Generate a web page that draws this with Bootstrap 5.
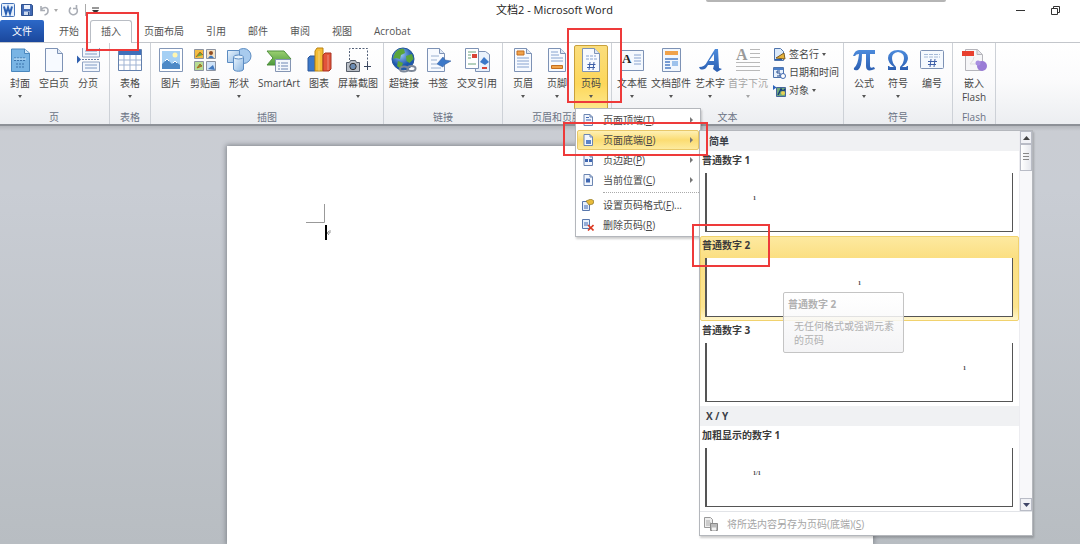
<!DOCTYPE html>
<html lang="zh-CN">
<head>
<meta charset="utf-8">
<meta name="viewport" content="width=device-width, initial-scale=1">
<title>文档2 - Microsoft Word</title>
<link href="https://cdn.jsdelivr.net/npm/bootstrap@5.3.0/dist/css/bootstrap.min.css" rel="stylesheet">
<style>
  body { font: 10px/14px "Open Sans", "Noto Sans CJK SC", sans-serif; color: #333; background: #fff; overflow: hidden; }
  button { font: inherit; color: inherit; background: none; border: 0; padding: 0; }
  svg { display: block; flex: none; }

  .title-bar { height: 20px; }
  .quick-bar { gap: 6px; padding-left: 1px; }
  .quick-rule { width: 1px; height: 12px; background: #aaa; }
  .title-text { font-size: 11px; color: #222; padding-left: 48px; }
  .window-btns { gap: 26px; padding-right: 20px; }
  .peek-edge { position: absolute; top: 0; right: 134px; width: 240px; height: 2px; background: #b5b5b5; border-radius: 0 0 2px 2px; }

  .ribbon-tabs { height: 22px; }
  .ribbon-tabs a { display: block; padding: 4px 11px; color: #555; text-decoration: none; white-space: nowrap; height: 22px; }
  .ribbon-tabs a.file-tab { background: linear-gradient(#2c68c8, #1b479c); color: #fff; border-radius: 2px 2px 0 0; padding: 4px 12px; margin-right: 4px; }
  .ribbon-tabs a.current-tab { border: 1px solid #b9bdc4; border-bottom: 0; border-radius: 3px 3px 0 0; padding: 3px 10px; background: #fff; height: 23px; position: relative; margin-right: 1px; }

  .ribbon { height: 84px; background: linear-gradient(#fff 0, #fbfbfc 45%, #eceef1 100%); border-top: 1px solid #c3c6cb; border-bottom: 2px solid #8d9197; }
  .ribbon-group { padding: 0 3px; border-right: 1px solid #cdd1d7; }
  .ribbon-group:first-child { padding-right: 4px; }
  .group-name { color: #6b7384; text-align: center; height: 14px; white-space: nowrap; }
  .tool { width: 34px; height: 65px; margin-top: 2px; display: flex; flex-direction: column; align-items: center; padding-top: 2px; white-space: nowrap; border-radius: 2px; color: #484848; }
  .tool svg.pic { width: 26px; height: 26px; margin-bottom: 3px; }
  .tool.w36 { width: 36px; } .tool.w42 { width: 42px; } .tool.w44 { width: 44px; } .tool.w46 { width: 46px; }
  .tool.pressed { border: 1px solid #c9a13c; padding-top: 1px; background: linear-gradient(#fadd7c, #fdd75a 60%, #fde88c); }
  .tool:disabled { color: #a4a4a4; }
  .caret { width: 0; height: 0; border: 2px solid transparent; border-top: 3px solid #555; border-bottom: 0; margin: 5px 0 0 0; flex: none; }
  .caret.side { margin: 0 0 0 4px; }
  .small-tools { width: 71px; padding: 2px 0 0 4px; color: #484848; }
  .small-tools button { display: flex; align-items: center; height: 18px; white-space: nowrap; gap: 3px; }
  .small-tools .caret { margin: 0; }

  .desk { background: linear-gradient(#b4b7bc 0, #cacdd3 5px, #c9cdd4 15%, #b8bdc2 100%); display: grid; grid-template-columns: 227fr 646fr 207fr; padding-top: 20px; }
  .sheet { grid-column: 2; background: #fff; box-shadow: 0 0 5px 1px #80858c; padding: 58px 0 0 79px; }

  .pop { position: absolute; background: #fff; border: 1px solid #b4b7bc; box-shadow: 1px 2px 2px #0003; z-index: 5; }
  .page-menu { left: 1px; top: 65px; width: 126px; padding: 1px; text-align: left; color: #484848; }
  .page-menu button { display: flex; align-items: center; width: 100%; height: 20px; padding-left: 4px; white-space: nowrap; border: 1px solid transparent; border-radius: 2px; }
  .page-menu button span { margin-left: 9px; }
  .page-menu button.chosen { background: linear-gradient(#fef0b4, #fbdc72 50%, #fdeb9f); border-color: #e8c869; }
  .page-menu .arrow { width: 0; height: 0; border: 3px solid transparent; border-left-color: #777; border-right: 0; margin-left: auto; margin-right: 5px; }
  .page-menu hr { margin: 2px 0 2px 26px; border: 0; border-top: 1px dotted #aaa; opacity: 1; }

  .gallery { left: 125px; top: 87px; width: 334px; }
  .gallery h6 { font-size: 10px; line-height: 20px; font-weight: 700; color: #3b3f48; margin: 0; background: #f0f1f3; padding-left: 6px; }
  .gallery h6.first-head { padding-left: 9px; }
  .choice { display: block; width: 100%; height: 85px; padding: 0 5px 0 1px; font-weight: 700; color: #3a3a3a; text-align: left; border: 1px solid transparent; border-radius: 2px; }
  .choice.hot { background: linear-gradient(#fde9a0, #fbdf83 20px, #fce48f 70px, #fff6cc); border-color: #f1d26e; }
  .choice .preview { display: block; height: 59px; margin: 6px 0 2px 3px; background: #fff; border: 1px solid #555; border-top: 0; border-left-width: 2px; font: 700 6px/8px "Liberation Serif", serif; padding: 21px 46px 0; }
  .gallery .roller { width: 13px; background: #f8f8fa; border-left: 1px solid #ececf0; }
  .roller button { height: 13px; border: 1px solid #b9bcc6; background: #f1f2f6; display: flex; align-items: center; justify-content: center; }
  .roller .thumb { height: 27px; border: 1px solid #b9bcc6; background: linear-gradient(90deg, #fff, #e6e8ed); padding: 8px 2px; }
  .thumb i { display: block; height: 1px; background: #888; margin-bottom: 2px; }
  .gallery-foot { height: 24px; border-top: 1px solid #e2e4e8; color: #a5a5a5; padding-left: 4px; }
  .gallery-foot button { display: flex; align-items: center; gap: 9px; }
  .gallery .tip { position: absolute; left: 83px; top: 161px; width: 121px; height: 61px; background: linear-gradient(#ffffffd9, #f2f2f4d9); border: 1px solid #c4c4c4; border-radius: 2px; color: #b0b0b0; padding: 4px; }
  .tip p { margin: 8px 0 0 6px; }

  .marker { position: absolute; border: 2px solid #ee3a3a; z-index: 20; pointer-events: none; }
  .mark-tab { left: -5px; top: -9px; width: 53px; height: 39px; }
  .mark-tool { left: -7px; top: -15px; width: 55px; height: 75px; }
  .mark-item { left: -11px; top: 79px; width: 145px; height: 34px; }
  .mark-choice { left: -8px; top: 93px; width: 78px; height: 43px; }
</style>
</head>
<body class="vh-100 d-flex flex-column position-relative">
<svg width="0" height="0" class="position-absolute">
  <defs>
    <linearGradient id="blue" x1="0" y1="0" x2="1" y2="1"><stop offset="0" stop-color="#eaf4fd"/><stop offset="1" stop-color="#8ab6e2"/></linearGradient>
    <linearGradient id="deep" x1="0" y1="0" x2="0" y2="1"><stop offset="0" stop-color="#4c8bdc"/><stop offset="1" stop-color="#2c5fb2"/></linearGradient>
    <linearGradient id="green" x1="0" y1="0" x2="0" y2="1"><stop offset="0" stop-color="#9bd070"/><stop offset="1" stop-color="#4c9a3d"/></linearGradient>
    <radialGradient id="globe" cx=".4" cy=".3"><stop offset="0" stop-color="#9cc9f5"/><stop offset="1" stop-color="#1c57ae"/></radialGradient>
    <symbol id="leaf" viewBox="0 0 26 26"><path d="M4.500 1.500h12l5 5v18h-17z" fill="#f7faff" stroke="#7d92b5"/><path d="M16.500 1.500v5h5" fill="#dfe8f5" stroke="#7d92b5"/></symbol>
    <symbol id="mini" viewBox="0 0 12 12"><path d="M2 .5h6l2.500 2.500v8.500H2z" fill="#f2f6fd" stroke="#6c86b2"/><path d="M8 .5V3h2.500" fill="none" stroke="#6c86b2"/></symbol>
  </defs>
</svg>

<header>
  <div class="title-bar row g-0 align-items-center">
    <div class="col d-flex align-items-center quick-bar">
      <svg width="14" height="14" viewBox="0 0 14 14"><rect x=".5" y=".5" width="13" height="13" rx="1" fill="#e5effb" stroke="#4472b8"/><path d="M3 3.500l2 7 2-6 2 6 2-7" fill="none" stroke="#2a5fb2" stroke-width="2"/></svg>
      <button aria-label="保存"><svg width="12" height="12" viewBox="0 0 12 12"><path d="M.5.500h10l1 1v10H.500z" fill="#4169b4" stroke="#30528f"/><path d="M3 1h6v4H3z" fill="#e9f0fb"/><path d="M3 7.500h6V11H3z" fill="#cfdcef"/><path d="M7 8h1.500v3H7z" fill="#30528f"/></svg></button>
      <button aria-label="撤消" class="d-flex align-items-center"><svg width="11" height="11" viewBox="0 0 11 11"><path d="M2 1v4.500h4M2 5C4 1.500 9.500 1.500 9 6c0 2-1.500 3.500-3.500 4" fill="none" stroke="#a9adb5" stroke-width="1.600"/></svg><i class="caret side opacity-50"></i></button>
      <button aria-label="恢复" class="ms-1"><svg width="11" height="11" viewBox="0 0 11 11"><path d="M3 2.500a4 4 0 1 0 5.500.800M8.500 0v3.500H5" fill="none" stroke="#a9adb5" stroke-width="1.600"/></svg></button>
      <i class="quick-rule"></i>
      <button aria-label="自定义"><svg width="7" height="7" viewBox="0 0 7 7"><path d="M0 1h7" stroke="#333"/><path d="M0 3h7L3.500 7z" fill="#333"/></svg></button>
    </div>
    <div class="col-auto title-text">文档2 - Microsoft Word</div>
    <div class="col d-flex justify-content-end align-items-center window-btns">
      <button aria-label="最小化"><svg width="9" height="9" viewBox="0 0 9 9"><path d="M0 4.500h9" stroke="#333"/></svg></button>
      <button aria-label="还原"><svg width="9" height="9" viewBox="0 0 9 9"><path d="M.5 2.500h6v6h-6zM2.500 2.500v-2h6v6h-2" fill="none" stroke="#333"/></svg></button>
    </div>
    <div class="peek-edge"></div>
  </div>

  <nav class="ribbon-tabs d-flex">
    <a href="#" class="file-tab">文件</a>
    <a href="#">开始</a>
    <a href="#" class="current-tab">插入<span class="marker mark-tab"></span></a>
    <a href="#">页面布局</a>
    <a href="#">引用</a>
    <a href="#">邮件</a>
    <a href="#">审阅</a>
    <a href="#">视图</a>
    <a href="#">Acrobat</a>
  </nav>

  <div class="ribbon d-flex">
    <section class="ribbon-group">
      <div class="d-flex">
        <button class="tool"><svg class="pic" viewBox="0 0 26 26"><path d="M4.500 2h13l5 4v18.500h-18z" fill="#78b4e4" stroke="#4a87bd"/><path d="M17.500 2v4.500h5" fill="#cfe6f8" stroke="#4a87bd"/><path d="M7 11h12M7 13.500h12M9 17h9M9 20h9" stroke="#3b73ab" stroke-dasharray="2 1"/><path d="M7 12h12" stroke="#cde6f8"/></svg>封面<i class="caret"></i></button>
        <button class="tool"><svg class="pic" viewBox="0 0 26 26"><use href="#leaf"/></svg>空白页</button>
        <button class="tool"><svg class="pic" viewBox="0 0 26 26"><path d="M7.500 1v9h17V1M7.500 24.500v-9.500h17v9.500z" fill="#f3f7fd" stroke="#8ea2c2"/><path d="M10 4h12M10 7h12M10 18h12M10 21h12" stroke="#7f9ac4"/><path d="M7 12.500h18" stroke="#6f83a6" stroke-dasharray="2 1"/><path d="M2 8.500l4 4-4 4z" fill="#2f5fae"/></svg>分页</button>
      </div>
      <div class="group-name">页</div>
    </section>
    <section class="ribbon-group">
      <div class="d-flex">
        <button class="tool"><svg class="pic" viewBox="0 0 26 26"><path d="M1.500 2.500h23v21h-23z" fill="#fff" stroke="#6380ad"/><path d="M2 3h22v5H2z" fill="#3f6fba"/><path d="M7 8v15M13 8v15M19 8v15M2 13h22M2 18h22" stroke="#9fb3d3"/></svg>表格<i class="caret"></i></button>
      </div>
      <div class="group-name">表格</div>
    </section>
    <section class="ribbon-group">
      <div class="d-flex">
        <button class="tool"><svg class="pic" viewBox="0 0 26 26"><path d="M1.500 1.500h23v23h-23z" fill="#fff" stroke="#8397b8"/><path d="M4 4h18v18H4z" fill="#a5d0f4"/><circle cx="17" cy="8" r="2.500" fill="#fff6b0"/><path d="M4 17l5-5 5 5 3-3 5 4v4H4z" fill="#4e8ac6"/><path d="M7 14l2-2 2 2M15 16l2-2 2 2" stroke="#fff" fill="none"/></svg>图片</button>
        <button class="tool"><svg class="pic" viewBox="0 0 26 26"><g stroke="#8b93a1"><path d="M2.500 2.500h9v9h-9z" fill="#f3bd43"/><path d="M14.500 2.500h9v9h-9z" fill="#f3e3c5"/><path d="M2.500 14.500h9v9h-9z" fill="#b7dc93"/><path d="M14.500 14.500h9v9h-9z" fill="#cfe3f8"/></g><path d="M4 10l4-5 3 3M5 21l3-4 2 2z" stroke="#b4661c" fill="#69a940"/><circle cx="19" cy="6" r="2" fill="#934c20"/><path d="M16 11q3-5 6 0M16 22l5-4 2 5z" fill="#4179bf"/></svg>剪贴画</button>
        <button class="tool"><svg class="pic" viewBox="0 0 26 26"><circle cx="17.500" cy="9" r="7.500" fill="#a8cbee" stroke="#5c8cc2"/><path d="M1.500 3.500h12v12h-12z" fill="url(#blue)" stroke="#5c8cc2"/><path d="M7.500 10v12c0 3 10 3 10 0V10" fill="url(#blue)" stroke="#5c8cc2"/><ellipse cx="12.500" cy="10" rx="5" ry="2" fill="#e6f2fc" stroke="#5c8cc2"/></svg>形状<i class="caret"></i></button>
        <button class="tool w46"><svg class="pic" viewBox="0 0 26 26"><path d="M1 4h17l7 8-5 6H1l6-7z" fill="url(#green)" stroke="#4f8f3d"/><path d="M9.500 12.500h15v12h-15z" fill="#f5f8fc" stroke="#8495b3"/><path d="M12 16h2M15 16h7M12 19h2M15 19h7M12 22h2M15 22h7" stroke="#6f87b3"/></svg>SmartArt</button>
        <button class="tool"><svg class="pic" viewBox="0 0 26 26"><path d="M2 11l2-2h5v15H2z" fill="#3c78c8" stroke="#2a569a"/><path d="M9 4l2-3h6v23H9z" fill="#f4bd35" stroke="#b98313"/><path d="M17 8l2-2h6v16l-2 2h-6z" fill="#e2543a" stroke="#a83222"/><path d="M13 4v20M22 8v15" stroke="#fff" opacity=".35"/></svg>图表</button>
        <button class="tool w44"><svg class="pic" viewBox="0 0 26 26"><path d="M4.500 13V1.500h18v16" fill="none" stroke="#536078" stroke-dasharray="2 1.500"/><path d="M19 19.500h7M22.500 16v7" stroke="#38455e"/><path d="M1.500 15.500h3l1-2h5l1 2h3v9h-13z" fill="#b9bec6" stroke="#555d69"/><circle cx="8" cy="19.500" r="3.200" fill="#6d8db3" stroke="#333"/></svg>屏幕截图<i class="caret"></i></button>
      </div>
      <div class="group-name">插图</div>
    </section>
    <section class="ribbon-group">
      <div class="d-flex">
        <button class="tool"><svg class="pic" viewBox="0 0 26 26"><circle cx="12" cy="12" r="11" fill="url(#globe)" stroke="#23569b"/><path d="M4 6q4-5 9-4l1 4-4 2-1 4-4-1-3 1zM15 9l6-2 1.500 5-4 4-3-2zM7 14l5 2-2 6-4-3z" fill="#5aa53b"/><g fill="none" stroke="#7c8798" stroke-width="2"><ellipse cx="13" cy="22" rx="4" ry="2.500"/><ellipse cx="20.500" cy="21.500" rx="4" ry="2.500"/></g></svg>超链接</button>
        <button class="tool"><svg class="pic" viewBox="0 0 26 26"><use href="#leaf" x="-2"/><path d="M6 9h8M6 13h6M6 17h6M6 21h10" stroke="#9ab0d0"/><path d="M12 17l6-7 2 3 6 1-7 4-1 2z" fill="#3c78c8" stroke="#2a569a" stroke-width=".500"/></svg>书签</button>
        <button class="tool w44"><svg class="pic" viewBox="0 0 26 26"><path d="M11.500 4.500h10l4 3v17h-14z" fill="#eaf2fc" stroke="#7d92b5"/><path d="M1.500 1.500h13v20h-13z" fill="#fff" stroke="#7d92b5"/><path d="M4 5h8M4 8h3M4 11h3M4 17h8" stroke="#6aa37c"/><path d="M8 7h5v4H8zM18 20h5v2h-5z" fill="#d94537"/><path d="M16 15l4-5 5 5-4 3z" fill="#3c78c8"/></svg>交叉引用</button>
      </div>
      <div class="group-name">链接</div>
    </section>
    <section class="ribbon-group">
      <div class="d-flex">
        <button class="tool"><svg class="pic" viewBox="0 0 26 26"><use href="#leaf"/><path d="M7 4h7v4H7z" fill="#f0a24a" stroke="#c46f1f"/><path d="M7 11h12M7 14h12M7 17h12M7 20h12" stroke="#86a2cf"/></svg>页眉<i class="caret"></i></button>
        <button class="tool"><svg class="pic" viewBox="0 0 26 26"><use href="#leaf"/><path d="M7 5h7M7 8h8M7 11h12M7 14h12" stroke="#86a2cf"/><path d="M7.500 18.500h11v3h-11z" fill="#f0a24a" stroke="#c46f1f"/></svg>页脚<i class="caret"></i></button>
        <div class="position-relative">
          <button class="tool pressed"><svg class="pic" viewBox="0 0 26 26"><use href="#leaf"/><path d="M8 9h10M8 12h11" stroke="#86a2cf" stroke-dasharray="3 1"/><path d="M12 15l-1 8M16 15l-1 8M9.500 17.500h8M9 20.500h8" stroke="#3e5fa8" fill="none"/></svg>页码<i class="caret"></i></button>
          <span class="marker mark-tool"></span>
          <div class="pop page-menu">
            <button><svg width="12" height="12" viewBox="0 0 12 12"><use href="#mini"/><path d="M4 3.500h3M4 6h5M4 8.500h5" stroke="#3f67b1"/></svg><span>页面顶端(<u>T</u>)</span><i class="arrow"></i></button>
            <button class="chosen"><svg width="12" height="12" viewBox="0 0 12 12"><use href="#mini"/><path d="M4 6h5v4H4z" fill="#5a82c7"/></svg><span>页面底端(<u>B</u>)</span><i class="arrow"></i></button>
            <button><svg width="12" height="12" viewBox="0 0 12 12"><use href="#mini"/><path d="M3 5h3v3H3zM7 5h3v3H7z" fill="#3f67b1"/></svg><span>页边距(<u>P</u>)</span><i class="arrow"></i></button>
            <button><svg width="12" height="12" viewBox="0 0 12 12"><use href="#mini"/><path d="M4 4.500h4v4H4z" fill="#3f67b1"/></svg><span>当前位置(<u>C</u>)</span><i class="arrow"></i></button>
            <hr>
            <button><svg width="12" height="12" viewBox="0 0 12 12"><path d="M.5 2.500h7v9h-7z" fill="#e8f0fb" stroke="#5877ac"/><path d="M2 7h4M2 9h4" stroke="#3f67b1"/><path d="M4 2l5-2 3 2-1 3-4 1z" fill="#e8bb3a" stroke="#8a7226" stroke-width=".700"/></svg><span>设置页码格式(<u>F</u>)...</span></button>
            <button><svg width="12" height="12" viewBox="0 0 12 12"><path d="M.5.500h7v9h-7z" fill="#e8f0fb" stroke="#5877ac"/><path d="M2 4h4M2 6h4" stroke="#3f67b1"/><path d="M6 6l5.500 5.500M11.500 6L6 11.500" stroke="#dc3a22" stroke-width="1.600"/></svg><span>删除页码(<u>R</u>)</span></button>
          </div>
          <span class="marker mark-item"></span>
          <div class="pop gallery text-start">
            <div class="d-flex">
              <div class="flex-fill">
                <h6 class="first-head">简单</h6>
                <button class="choice">普通数字 1<span class="preview">1</span></button>
                <button class="choice hot">普通数字 2<span class="preview text-center">1</span></button>
                <button class="choice">普通数字 3<span class="preview text-end">1</span></button>
                <h6>X / Y</h6>
                <button class="choice">加粗显示的数字 1<span class="preview">1/1</span></button>
              </div>
              <div class="roller d-flex flex-column">
                <button aria-label="向上"><svg width="7" height="4"><path d="M0 4l3.500-4L7 4z" fill="#444"/></svg></button>
                <div class="thumb"><i></i><i></i><i></i></div>
                <button aria-label="向下" class="mt-auto"><svg width="7" height="4"><path d="M0 0l3.500 4L7 0z" fill="#3f4668"/></svg></button>
              </div>
            </div>
            <div class="gallery-foot d-flex align-items-center"><button disabled><svg width="14" height="14" viewBox="0 0 14 14"><path d="M.5.500h6l2 2v8h-8z" fill="#eee" stroke="#999"/><path d="M2 4h4M2 6h5M2 8h5" stroke="#aaa"/><path d="M6.500 6.500h7v7h-7z" fill="#bbb" stroke="#8a8a8a"/><path d="M8 10.500h4v3H8z" fill="#f4f4f4"/></svg><span>将所选内容另存为页码(底端)(<u>S</u>)</span></button></div>
            <div class="tip" role="tooltip"><b>普通数字 2</b><p>无任何格式或强调元素的页码</p></div>
            <span class="marker mark-choice"></span>
          </div>
        </div>
      </div>
      <div class="group-name">页眉和页脚</div>
    </section>
    <section class="ribbon-group">
      <div class="d-flex">
        <button class="tool"><svg class="pic" viewBox="0 0 26 26"><path d="M1.500 3.500h23v20h-23z" fill="#f5f9fe" stroke="#7d92b5"/><path d="M15 8h7M15 11h7M15 14h7M15 17h7" stroke="#86a2cf"/><text x="3" y="16" font-family="Liberation Serif, serif" font-weight="700" font-size="13" fill="#222">A</text></svg>文本框<i class="caret"></i></button>
        <button class="tool w44"><svg class="pic" viewBox="0 0 26 26"><path d="M4.500 1.500h18v23h-18z" fill="#f2f7fd" stroke="#7d92b5"/><path d="M7 4h13v4H7z" fill="#f0a24a"/><path d="M7 12h13M7 15h5M7 18h5M7 21h6" stroke="#4d7dc4" stroke-width="1.500"/><path d="M14 14h6v5h-6z" fill="#9dc2ec"/></svg>文档部件<i class="caret"></i></button>
        <button class="tool"><svg class="pic" viewBox="0 0 26 26"><path fill-rule="evenodd" d="M2 20q6 0 8-5L18 2h3l1 19 3 1-5 3-4-3 1-4h-6q-3 6-8 4zM12 14h5V7z" fill="url(#deep)"/></svg>艺术字<i class="caret"></i></button>
        <button class="tool w42" disabled><svg class="pic" viewBox="0 0 26 26"><path d="M15 2.500h10M15 6.500h10M15 10.500h10M1 15.500h24M1 19.500h24M1 23.500h24" stroke="#b9b9b9"/><text x="1" y="13" font-family="Liberation Serif, serif" font-weight="700" font-size="16" fill="#9a9a9a">A</text></svg>首字下沉<i class="caret opacity-50"></i></button>
        <div class="small-tools">
          <button><svg width="13" height="13" viewBox="0 0 13 13"><path d="M1.500.500h6l3 3v9h-9z" fill="#dceafa" stroke="#4f74ad"/><path d="M3 10l8-5 1 6z" fill="#e7b33a" stroke="#7b5b22"/><path d="M2 11.500h7" stroke="#275eae"/></svg>签名行<i class="caret"></i></button>
          <button><svg width="13" height="13" viewBox="0 0 13 13"><path d="M.5 1.500h10v10H.500z" fill="#e6f0fc" stroke="#4f74ad"/><path d="M1 2h9v2H1z" fill="#4a7fca"/><path d="M7 5H4v2h3v3H4" fill="none" stroke="#274d8d"/><circle cx="10" cy="10" r="2.500" fill="#fff" stroke="#3f67b1"/></svg>日期和时间</button>
          <button><svg width="13" height="13" viewBox="0 0 13 13"><path d="M3.500 3.500h9v9h-9z" fill="#6fa97b" stroke="#45659c"/><path d="M0 1l3.500 2.500L0 6z" fill="#2a62bc"/><path d="M5 11l3-6 2 3 2-3" stroke="#173e78" fill="none" stroke-width="1.500"/><circle cx="10" cy="9" r="2" fill="#e9d155"/></svg>对象<i class="caret"></i></button>
        </div>
      </div>
      <div class="group-name">文本</div>
    </section>
    <section class="ribbon-group">
      <div class="d-flex">
        <button class="tool"><svg class="pic" viewBox="0 0 26 26"><path d="M2 9q2-6 6-6h16v4h-5v12q0 3 4 1l1 2q-9 4-9-3V7h-4q0 13-4 16-5 1-4-2 4-3 5-14-3 0-4 2z" fill="url(#deep)"/></svg>公式<i class="caret"></i></button>
        <button class="tool"><svg class="pic" viewBox="0 0 26 26"><path d="M3 23v-4h1l1 1h4Q3 16 3 11 4 3 13 3t10 8q0 5-6 9h4l1-1h1v4h-8v-3q4-4 4-9 0-5-6-6-6 1-6 6 0 5 4 9v3z" fill="url(#deep)"/></svg>符号<i class="caret"></i></button>
        <button class="tool"><svg class="pic" viewBox="0 0 26 26"><rect x="1.500" y="3.500" width="23" height="18" rx="1" fill="#f5f9fe" stroke="#7d92b5"/><path d="M5 7.500h16M5 10h16" stroke="#a5bad8" stroke-dasharray="4 1"/><path d="M12 12l-1 8M16 12l-1 8M9 14.500h9M9 17.500h8" stroke="#3e5fa8" fill="none"/></svg>编号</button>
      </div>
      <div class="group-name">符号</div>
    </section>
    <section class="ribbon-group">
      <div class="d-flex">
        <button class="tool w36"><svg class="pic" viewBox="0 0 26 26"><path d="M4.500 2.500h12l5 5v16h-17z" fill="#f6f6f8" stroke="#b5b5bb"/><path d="M16 2.500v5h5" fill="#e4e4e8" stroke="#b5b5bb"/><path d="M1 4h12v5H1z" fill="#e8402f"/><path d="M9 17q4-4 4-7M9 17h6" stroke="#ddd" fill="none"/><circle cx="21" cy="19" r="5" fill="#9a7cd6"/><circle cx="17" cy="16" r="2.500" fill="#a88fe0"/></svg>嵌入<span>Flash</span></button>
      </div>
      <div class="group-name">Flash</div>
    </section>
  </div>
</header>

<main class="desk flex-fill">
  <div class="sheet">
    <svg width="30" height="38" viewBox="0 0 30 38"><path d="M0 18.500h18.500V0" fill="none" stroke="#999"/><path d="M20 21v15" stroke="#000" stroke-width="2"/><path d="M21 29h3V26M21 29l2-2M21 29l2 2" fill="none" stroke="#999"/></svg>
  </div>
</main>
<script src="https://cdn.jsdelivr.net/npm/bootstrap@5.3.0/dist/js/bootstrap.bundle.min.js"></script>
</body>
</html>
